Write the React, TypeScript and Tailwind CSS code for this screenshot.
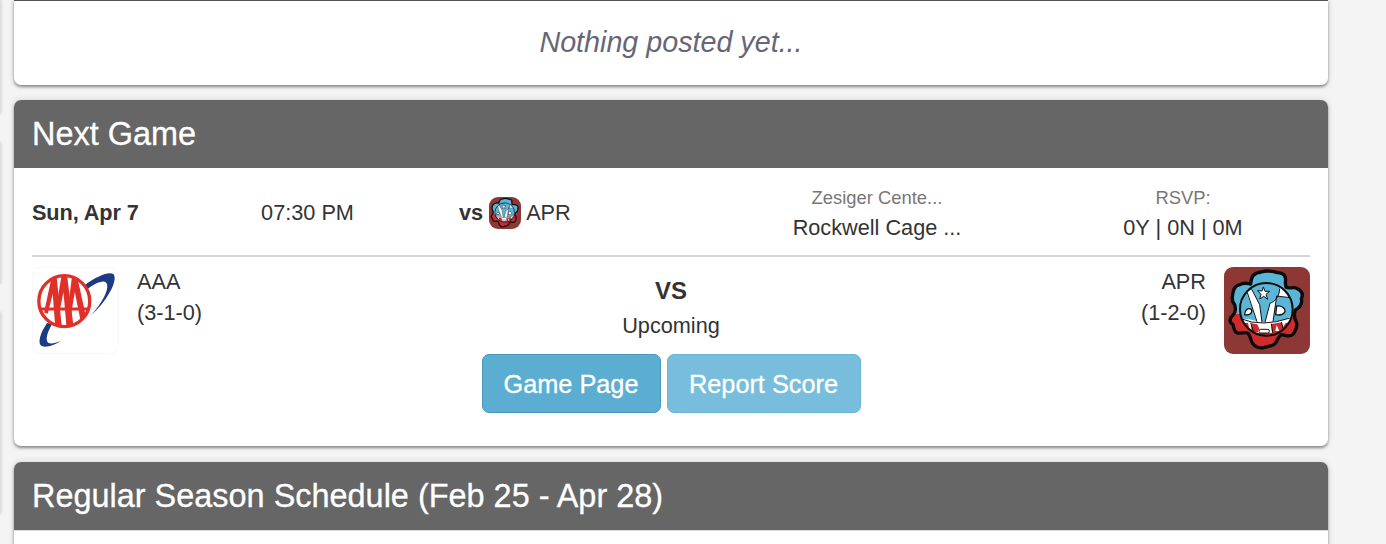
import React from "react";

const gear =
  "M110 72C112 46 122 38 142 36C158 30 174 33 190 38C212 39 217 50 214 68L216 82C230 88 238 78 250 86C266 94 267 106 262 116C266 132 258 142 244 150C240 162 242 176 246 184C254 200 244 212 238 222C228 234 214 224 202 224C190 230 192 242 182 252C172 260 162 258 152 262C137 267 122 260 116 250C108 242 112 228 102 220C92 214 82 222 70 219C58 214 60 202 57 194C44 186 46 174 58 164C64 158 66 148 62 134C52 124 54 114 56 104C58 84 66 76 78 74C90 66 98 70 110 72Z";

function AprLogo({ className }: { className: string }) {
  return (
    <svg className={className} viewBox="30 21 258 261" preserveAspectRatio="none" role="img">
      <rect x="30" y="21" width="258" height="261" fill="#8d3835" />
      <path d={gear} fill="#5bb5d6" />
      <path
        d="M60 162L243 162L246 184C254 200 244 212 238 222C228 234 214 224 202 224C190 230 192 242 182 252C172 260 162 258 152 262C137 267 122 260 116 250C108 242 112 228 102 220C92 214 82 222 70 219C58 214 60 202 57 194C44 186 46 174 60 162Z"
        fill="#cf2b2c"
      />
      <circle cx="157" cy="148" r="79" fill="#fff" />
      <path d="M112 84C126 72 142 69 160 69C174 70 188 74 198 82C198 106 186 124 168 130L153 186L144 186L137 134Z" fill="#5bb5d6" />
      <path d="M98 98L128 184L106 178L84 176C78 154 80 120 98 98Z" fill="#5bb5d6" />
      <path d="M188 108L228 114C238 134 237 158 228 170C212 180 196 184 177 184Z" fill="#5bb5d6" />
      <path d="M100 98L129 185M112 86L137 134L144 187M153 187L168 130C184 124 196 110 197 86M177 185L188 108L228 113" fill="none" stroke="#111" strokeWidth="3" />
      <path d="M92 164C92 150 102 142 112 148C117 158 106 168 92 164ZM188 138C204 136 216 146 212 157C206 165 194 166 185 164Z" fill="#fff" stroke="#111" strokeWidth="4" />
      <path d="M88 190L102 188L106 206L124 218H180L202 210L214 190L226 186Q214 214 192 224Q156 238 122 222Q100 210 88 190Z" fill="#cf2b2c" />
      <path d="M112 190L130 193L136 206L130 218L112 212ZM172 192L204 187L208 208L192 222L174 218Z" fill="#cf2b2c" />
      <path d="M184 212L188 195L196 214Z" fill="#fff" />
      <path d="M80 176Q112 190 150 189T228 174M110 188L118 214M172 191L176 218M202 186L208 208" fill="none" stroke="#111" strokeWidth="3" />
      <path d="M148 81L153 94L167 94L156 103L161 118L149 109L137 117L141 103L131 92L144 93Z" fill="#fff" stroke="#111" strokeWidth="3" />
      <rect x="135" y="208" width="31" height="11" rx="5" fill="#fff" stroke="#111" strokeWidth="3" />
      <circle cx="157" cy="148" r="79" fill="none" stroke="#0b0b0b" strokeWidth="6" />
      <path d={gear} fill="none" stroke="#0b0b0b" strokeWidth="10" strokeLinejoin="round" />
    </svg>
  );
}

function AaaLogo() {
  return (
    <svg className="h-[87px] w-[87px] shrink-0" viewBox="37 37 260 260" role="img">
      <rect x="38" y="38" width="257" height="257" rx="24" fill="#fff" stroke="#f1f1f1" strokeWidth="2" />
      <path d="M196 90C232 64 268 49 281 59C295 79 260 141 210 186C248 143 272 98 258 83C248 75 222 88 202 104Z" fill="#1c3a86" />
      <path d="M82 204C62 233 52 265 66 273C79 279 104 271 123 258C101 267 86 269 82 258C78 246 86 227 97 207Z" fill="#1c3a86" />
      <circle cx="133.5" cy="139" r="76" fill="#fff" stroke="#e1302a" strokeWidth="10" />
      <g fill="#e1302a">
        <path d="M95 70H111L126 214L106 210L99 118L84 177L73 173Z" />
        <path d="M125 64H142L161 214H140L131 112L118 177H106Z" />
        <path d="M156 70H173L198 184L183 202L165 112L154 177H142Z" />
        <path d="M62 158H205V167H62Z" />
      </g>
    </svg>
  );
}

function CardHeader({ children }: { children: React.ReactNode }) {
  return (
    <h2 className="flex h-[68px] items-center rounded-t-[7px] bg-[#666] px-[18px] text-[32.45px] leading-none text-white [-webkit-text-stroke:0.3px_white]">
      {children}
    </h2>
  );
}

const card = "rounded-[7px] bg-white shadow-[0_2px_3px_rgba(0,0,0,0.4),0_0_7px_rgba(0,0,0,0.12)]";

export default function App() {
  return (
    <div className="flex h-[544px] w-full overflow-hidden bg-[#f4f4f4] font-['Liberation_Sans',Arial,sans-serif] text-[21.7px] text-[#333]">
      <aside className="flex w-[14px] shrink-0 flex-col gap-[28px]">
        <div className="h-[114px] w-px rounded-br-[7px] bg-[#ddd] shadow-[0_0_3px_rgba(0,0,0,0.3)]" />
        <div className="h-[142px] w-px rounded-r-[7px] bg-[#ddd] shadow-[0_0_3px_rgba(0,0,0,0.3)]" />
        <div className="h-[202px] w-px rounded-r-[7px] bg-[#ddd] shadow-[0_0_3px_rgba(0,0,0,0.3)]" />
      </aside>
      <main className="flex w-[1314px] shrink-0 flex-col">
        <section className="h-[85px] shrink-0 rounded-b-[7px] border-t border-[#555] bg-white text-center shadow-[0_2px_3px_rgba(0,0,0,0.4),0_0_7px_rgba(0,0,0,0.12)]">
          <p className="pt-[22px] text-[28.7px] leading-[38px] text-[#667] italic">Nothing posted yet...</p>
        </section>

        <section className={`mt-[15px] h-[346px] shrink-0 ${card}`}>
          <CardHeader>Next Game</CardHeader>
          <div className="px-[18px]">
            <div className="flex h-[89px] items-center border-b-2 border-[#d6d6d6] pt-[2px]">
              <div className="w-[180px] pt-[2px] font-bold tracking-[-0.1px]">Sun, Apr 7</div>
              <div className="w-[191px] pt-[2px] text-center">07:30 PM</div>
              <div className="ml-[56px] flex w-[250px] items-center pt-px">
                <b>vs</b>
                <AprLogo className="mr-[5px] ml-[6px] h-8 w-8 rounded-[9px]" />
                <span>APR</span>
              </div>
              <div className="w-[336px] text-center leading-[30px]">
                <div className="text-[18.4px] text-[#777]">Zesiger Cente...</div>
                <div>Rockwell Cage ...</div>
              </div>
              <div className="ml-[11px] w-[254px] text-center leading-[30px]">
                <div className="text-[18.4px] text-[#777]">RSVP:</div>
                <div>0Y | 0N | 0M</div>
              </div>
            </div>
            <div className="flex items-start pt-[10px]">
              <AaaLogo />
              <div className="-mt-px ml-[18px] w-[190px] leading-[31px]">
                <div>AAA</div>
                <div>(3-1-0)</div>
              </div>
              <div className="flex flex-1 flex-col items-center pt-[7px] pr-px">
                <div className="-mt-px text-[24px] leading-[35px] font-bold">VS</div>
                <div className="leading-[35px]">Upcoming</div>
                <div className="mt-[11px] flex gap-[6px] text-[25.3px] text-white [-webkit-text-stroke:0.3px_white]">
                  <button className="h-[59px] w-[179px] rounded-[7px] border border-[#4799bb] bg-[#5badd1] pt-[2px]">Game Page</button>
                  <button className="h-[59px] w-[194px] rounded-[7px] border border-[#69b7d8] bg-[#78bddb] pt-[2px]">Report Score</button>
                </div>
              </div>
              <div className="-mt-px mr-[18px] w-[190px] text-right leading-[31px]">
                <div>APR</div>
                <div>(1-2-0)</div>
              </div>
              <AprLogo className="h-[87px] w-[86px] shrink-0 rounded-[9px]" />
            </div>
          </div>
        </section>

        <section className={`mt-[16px] h-[200px] shrink-0 ${card}`}>
          <CardHeader>Regular Season Schedule (Feb 25 - Apr 28)</CardHeader>
          <div className="border-t border-[#ddd]" />
        </section>
      </main>
    </div>
  );
}
